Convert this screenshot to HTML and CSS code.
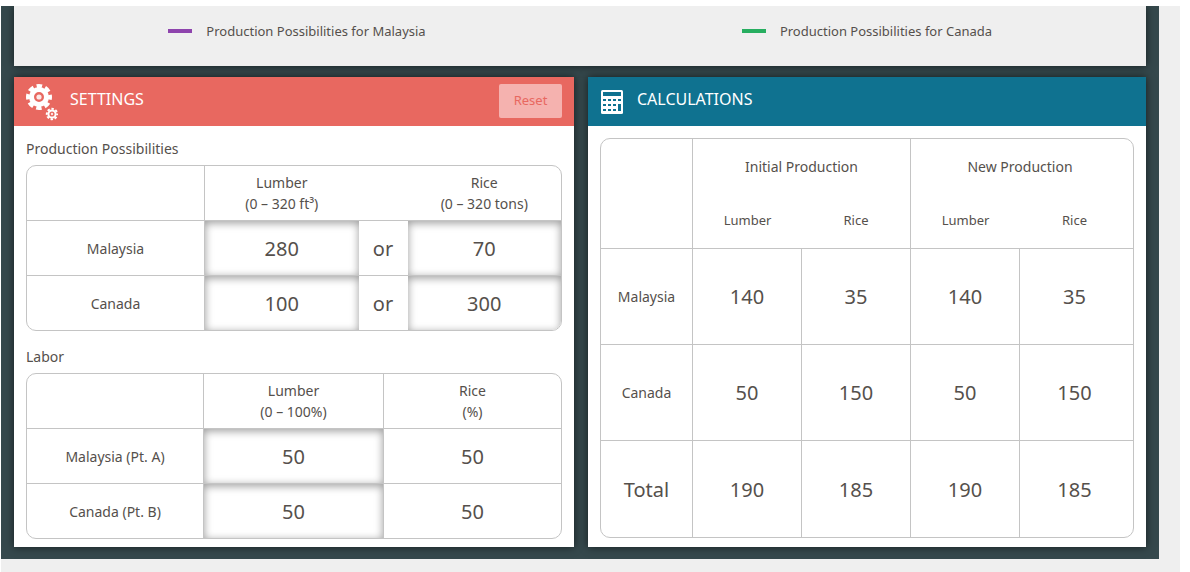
FILE: index.html
```html
<!DOCTYPE html>
<html lang="en">
<head>
<meta charset="utf-8">
<title>Production Possibilities</title>
<link rel="stylesheet" href="styles.css">
</head>
<body>
<div class="page">
<main class="stage">
  <section class="legend">
    <div class="legend-item"><span class="swatch swatch-malaysia"></span>Production Possibilities for Malaysia</div>
    <div class="legend-item legend-item-second"><span class="swatch swatch-canada"></span>Production Possibilities for Canada</div>
  </section>
  <div class="panels">
    <section class="panel">
      <header class="panel-head head-settings">
        <svg class="icon-gears" viewBox="0 0 32 38" width="32" height="38" aria-hidden="true">
          <g fill="none" stroke="#fff">
            <circle cx="13" cy="14" r="7.5" stroke-width="5"/>
            <circle cx="13" cy="14" r="11" stroke-width="4" stroke-dasharray="5.4 3.24" stroke-dashoffset="2.7"/>
            <circle cx="26" cy="31" r="3.6" stroke-width="2"/>
            <circle cx="26" cy="31" r="5.2" stroke-width="2" stroke-dasharray="2.4 1.68" stroke-dashoffset="1.2"/>
          </g>
          <circle cx="13" cy="14" r="2.6" fill="#fff" opacity=".85"/>
          <circle cx="26" cy="31" r="1.2" fill="#fff" opacity=".8"/>
        </svg>
        <h2 class="panel-title">SETTINGS</h2>
        <button class="reset" type="button">Reset</button>
      </header>
      <div class="panel-body">
        <h3 class="group-title">Production Possibilities</h3>
        <div class="frame">
          <table class="grid grid-settings">
            <colgroup><col class="col-name"><col><col class="col-or"><col></colgroup>
            <thead>
              <tr><th class="line-r"></th><th>Lumber<br>(0 – 320 ft³)</th><th></th><th>Rice<br>(0 – 320 tons)</th></tr>
            </thead>
            <tbody>
              <tr><th class="line-r">Malaysia</th><td><input class="entry" type="text" aria-label="Malaysia lumber" value="280"></td><td>or</td><td><input class="entry" type="text" aria-label="Malaysia rice" value="70"></td></tr>
              <tr><th class="line-r">Canada</th><td><input class="entry" type="text" aria-label="Canada lumber" value="100"></td><td>or</td><td><input class="entry" type="text" aria-label="Canada rice" value="300"></td></tr>
            </tbody>
          </table>
        </div>
        <h3 class="group-title group-title-labor">Labor</h3>
        <div class="frame">
          <table class="grid grid-settings">
            <colgroup><col><col class="col-labor"><col></colgroup>
            <thead>
              <tr><th class="line-r"></th><th class="line-r">Lumber<br>(0 – 100%)</th><th>Rice<br>(%)</th></tr>
            </thead>
            <tbody>
              <tr><th class="line-r">Malaysia (Pt. A)</th><td class="line-r"><input class="entry" type="text" aria-label="Malaysia labor for lumber, percent" value="50"></td><td>50</td></tr>
              <tr><th class="line-r">Canada (Pt. B)</th><td class="line-r"><input class="entry" type="text" aria-label="Canada labor for lumber, percent" value="50"></td><td>50</td></tr>
            </tbody>
          </table>
        </div>
      </div>
    </section>
    <section class="panel">
      <header class="panel-head head-calc">
        <svg class="icon-calc" viewBox="0 0 24 24" width="24" height="24" aria-hidden="true">
          <rect x="1" y="0" width="22" height="24" rx="1.5" fill="#fff"/>
          <g fill="#0f7290">
            <rect x="3" y="2" width="18" height="4"/>
            <rect x="3" y="9" width="3" height="2"/><rect x="8" y="9" width="3" height="2"/><rect x="13" y="9" width="3" height="2"/><rect x="18" y="9" width="3" height="2"/>
            <rect x="3" y="14" width="3" height="2"/><rect x="8" y="14" width="3" height="2"/><rect x="13" y="14" width="3" height="2"/><rect x="18" y="14" width="3" height="7"/>
            <rect x="3" y="19" width="3" height="2"/><rect x="8" y="19" width="3" height="2"/><rect x="13" y="19" width="3" height="2"/>
          </g>
        </svg>
        <h2 class="panel-title">CALCULATIONS</h2>
      </header>
      <div class="panel-body panel-body-calc">
        <div class="frame">
          <table class="grid grid-calc">
            <colgroup><col class="col-country"><col class="col-value"><col class="col-value"><col class="col-value"><col></colgroup>
            <thead>
              <tr class="group-row"><th class="line-r" rowspan="2"></th><th class="line-r" colspan="2">Initial Production</th><th class="last" colspan="2">New Production</th></tr>
              <tr class="goods-row"><th>Lumber</th><th class="line-r">Rice</th><th>Lumber</th><th class="last">Rice</th></tr>
            </thead>
            <tbody>
              <tr><th class="line-r">Malaysia</th><td class="line-r">140</td><td class="line-r">35</td><td class="line-r">140</td><td class="last">35</td></tr>
              <tr><th class="line-r">Canada</th><td class="line-r">50</td><td class="line-r">150</td><td class="line-r">50</td><td class="last">150</td></tr>
              <tr><th class="line-r total">Total</th><td class="line-r">190</td><td class="line-r">185</td><td class="line-r">190</td><td class="last">185</td></tr>
            </tbody>
          </table>
        </div>
      </div>
    </section>
  </div>
</main>
</div>
</body>
</html>
```
FILE: styles.css
```css
* { box-sizing: border-box; }
body {
  margin: 0;
  padding: 6px 10px 0 1px;
  background: #fff;
  color: #55504c;
  font: 14px/21px "Noto Sans", sans-serif;
}
h2, h3 { margin: 0; font-weight: 400; }
.page {
  min-height: calc(100vh - 6px);
  padding-right: 21px;
  background: #efefef;
}
.stage {
  overflow: hidden;
  padding: 0 13px 12px;
  background: #35484c;
}
.legend {
  display: grid;
  grid-template-columns: 1fr 1fr;
  height: 60px;
  padding-bottom: 10px;
  background: #efefef;
  box-shadow: 0 0 8px rgba(0, 0, 0, .6);
  font-size: 13px;
}
.legend-item {
  display: flex;
  align-items: center;
  justify-content: center;
  gap: 14px;
}
.legend-item-second { padding-left: 8px; }
.swatch { width: 24px; height: 4px; }
.swatch-malaysia { background: #8e44ad; }
.swatch-canada { background: #27ae60; }
.panels {
  display: grid;
  grid-template-columns: 280fr 279fr;
  gap: 14px;
  margin-top: 11px;
}
.panel {
  background: #fff;
  box-shadow: 0 0 8px rgba(0, 0, 0, .6);
}
.panel-head {
  display: flex;
  align-items: center;
  height: 49px;
  padding: 0 12px 2px;
  color: #fff;
}
.head-settings { background: #e86860; }
.head-calc { background: #0f7290; }
.icon-gears { margin-top: 2px; }
.icon-calc { margin: 2px 1px 0 0; }
.panel-title {
  padding-bottom: 2px;
  margin-left: 12px;
  font-size: 16px;
}
.reset {
  width: 63px;
  height: 34px;
  margin-left: auto;
  padding: 0;
  border: 0;
  border-radius: 2px;
  background: #f5b2af;
  color: #e86860;
  font: inherit;
  font-size: 13px;
}
.panel-body { padding: 12px 12px 8px; }
.group-title {
  padding-bottom: 6px;
  font-size: 14px;
}
.group-title-labor { padding-top: 15px; }
.frame {
  overflow: hidden;
  border: 1px solid #c4c4c4;
  border-radius: 10px;
}
.grid {
  width: 100%;
  table-layout: fixed;
  border-collapse: separate;
  border-spacing: 0;
  text-align: center;
}
.grid th, .grid td { padding: 0; font-weight: 400; }
.grid td, .grid .total { font-size: 20px; }
.grid tbody th, .grid tbody td { border-top: 1px solid #c4c4c4; }
.grid .line-r { border-right: 1px solid #c4c4c4; }
.grid-settings tr { height: 55px; }
.grid-settings thead tr { height: 54px; }
.col-name { width: 178px; }
.col-or { width: 49px; }
.col-labor { width: 180px; }
.entry {
  display: block;
  width: 100%;
  height: 54px;
  padding: 0;
  border: 0;
  border-radius: 0;
  background: #fff;
  box-shadow: inset 0 2px 8px rgba(0, 0, 0, .4);
  color: inherit;
  font: inherit;
  text-align: center;
}
.col-country { width: 92px; }
.col-value { width: 109px; }
.group-row { height: 54px; }
.goods-row { height: 55px; font-size: 13px; }
.grid-calc tbody tr { height: 96px; }
.grid-calc tbody tr:last-child { height: 97px; }
.grid .last { padding-right: 4px; }
```
